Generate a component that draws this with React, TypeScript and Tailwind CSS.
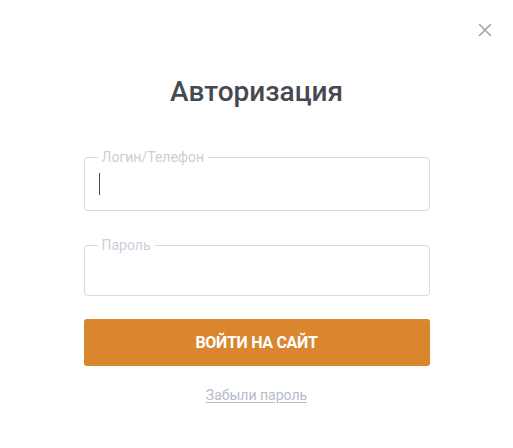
import React from "react";

export default function App() {
  return (
    <div
      className="relative w-[513px] h-[448px] bg-white flex flex-col items-center"
      style={{ fontFamily: "Roboto, 'Liberation Sans', sans-serif" }}
    >
      <button className="absolute right-[21px] top-[23px] w-[14px] h-[14px] text-[#9ea6b0]">
        <svg width="14" height="14" viewBox="0 0 14 14" fill="none" stroke="currentColor" strokeWidth="1.6" strokeLinecap="round">
          <path d="M1.5 1.5 L12.5 12.5 M12.5 1.5 L1.5 12.5" />
        </svg>
      </button>

      <h1 className="mt-[76px] h-[32px] leading-[32px] text-[28px] font-medium text-[#454a52]">Авторизация</h1>

      <div className="mt-[42px] w-[346px] flex flex-col">
        <fieldset className="relative h-[61px] border border-[#d5dae1] rounded-[4px] pl-[13px] pr-3 m-0">
          <legend className="px-[4px] text-[14px] leading-[14px] text-[#c9d0d9]">Логин/Телефон</legend>
          <div className="absolute left-[14px] top-[9px] w-px h-[22px] bg-[#4a4f57]" />
        </fieldset>

        <fieldset className="mt-[27px] h-[58px] border border-[#d5dae1] rounded-[4px] pl-[13px] pr-3 m-0">
          <legend className="px-[4px] text-[14px] leading-[14px] text-[#c9d0d9]">Пароль</legend>
        </fieldset>

        <button className="mt-[23px] h-[47px] w-full rounded-[3px] bg-[#d9862f] text-white text-[16px] font-bold uppercase tracking-[-0.3px]">
          Войти на сайт
        </button>

        <a className="mt-[21px] self-center text-[14px] leading-[16px] text-[#b4bcc7] underline underline-offset-2 cursor-pointer">
          Забыли пароль
        </a>
      </div>
    </div>
  );
}
